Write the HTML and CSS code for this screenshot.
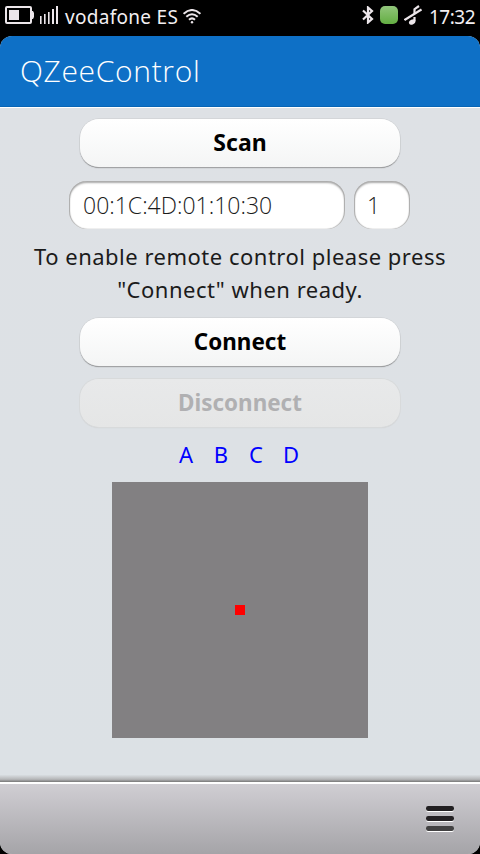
FILE: index.html
```html
<!DOCTYPE html>
<html lang="en">
<head>
<meta charset="utf-8">
<title>QZeeControl</title>
<link rel="stylesheet" href="styles.css">
</head>
<body>
<div class="status">
  <svg class="battery" width="29" height="18" viewBox="0 0 29 18"><rect x="1" y="1" width="25" height="16" rx="1" fill="none" stroke="#ece6ea" stroke-width="2"/><path d="M27 5h1l1 2v4l-1 2h-1z" fill="#ece6ea"/><rect x="4" y="4" width="10" height="10" fill="#ece6ea"/></svg>
  <svg class="signal" width="18" height="18" viewBox="0 0 18 18" fill="#ece6ea"><path d="M0 10h1.6v8H0zM4 8h1.6v10H4zM8 6h1.6v12H8zM12 3h2v15h-2zM16 0h2v18h-2z"/></svg>
  <span class="carrier">vodafone ES</span>
  <svg class="wifi" width="18" height="15" viewBox="0 0 18 15" fill="none" stroke="#ece6ea" stroke-width="2"><path d="M.6 4.8Q9-2.8 17.4 4.8M3.3 7.8Q9 2.6 14.7 7.8M6 10.7Q9 8 12 10.7"/><circle cx="9" cy="13.2" r="1.2" fill="#ece6ea" stroke="none"/></svg>
  <span class="spacer"></span>
  <svg class="bluetooth" width="12" height="18" viewBox="0 0 12 18" fill="none" stroke="#ece6ea" stroke-width="2.2"><path d="M1 4.5l9 8.5-4 3.5v-15L10 5l-9 8.5"/></svg>
  <span class="presence"></span>
  <svg class="silent" width="18" height="20" viewBox="0 0 18 20" fill="none" stroke="#ece6ea"><path d="M.5 15L17.5 4.5" stroke-width="2.2"/><path d="M10.5 9V4.2L15 1M10.5 12v4" stroke-width="2.2"/><ellipse cx="8.2" cy="17" rx="3.4" ry="2.4" transform="rotate(-25 8.2 17)" fill="#ece6ea" stroke="none"/></svg>
  <span class="clock">17:32</span>
</div>
<div class="app">
  <header class="header"><h1 class="title">QZeeControl</h1></header>
  <main class="content">
    <button class="button scan"><span>Scan</span></button>
    <div class="fields">
      <div class="field address"><span>00:1C:4D:01:10:30</span></div>
      <div class="field channel"><span>1</span></div>
    </div>
    <p class="message">To enable remote control please press<br>"Connect" when ready.</p>
    <button class="button connect"><span>Connect</span></button>
    <button class="button disconnect" disabled><span>Disconnect</span></button>
    <nav class="letters"><a>A</a><a>B</a><a>C</a><a>D</a></nav>
    <div class="pad"><span class="dot"></span></div>
  </main>
  <footer class="toolbar">
    <svg width="30" height="28" viewBox="0 0 30 28"><g fill="#fff"><rect x="1" y="2" width="28" height="5" rx="2.5"/><rect x="1" y="12" width="28" height="5" rx="2.5"/><rect x="1" y="22" width="28" height="5" rx="2.5"/></g><rect x="1" y="1" width="28" height="5" rx="2.2" fill="#211f21"/><rect x="1" y="11" width="28" height="5" rx="2.2" fill="#242124"/><rect x="1" y="21" width="28" height="5" rx="2.2" fill="#424142"/></svg>
  </footer>
</div>
</body>
</html>
```
FILE: styles.css
```css
* { box-sizing: border-box; }
body {
  margin: 0;
  width: 480px;
  height: 854px;
  overflow: hidden;
  background: #000;
  font-family: "Noto Sans", "Open Sans", sans-serif;
  color: #1b1b1b;
}
.status {
  height: 36px;
  display: flex;
  align-items: flex-start;
  padding: 6px 4px 0 5px;
  color: #f3eff2;
  font-size: 19px;
  line-height: 22px;
  white-space: nowrap;
}
.signal { margin-left: 6px; }
.carrier { margin-left: 7px; width: 113px; letter-spacing: .3px; }
.wifi { margin: 3px 0 0 5px; }
.spacer { flex: 1; }
.presence {
  width: 18px;
  height: 18px;
  margin: 0 6px;
  border-radius: 5px;
  background: linear-gradient(#91c57b, #63ae42);
}
.silent { margin-top: -1px; }
.clock { width: 47px; margin-left: 7px; letter-spacing: -.5px; }
.app {
  height: 818px;
  display: flex;
  flex-direction: column;
  border-radius: 12px;
  overflow: hidden;
  background: #dee1e5;
}
.header {
  height: 71px;
  padding-left: 20px;
  background: #0e70c6;
  border-bottom: 1px solid #0865b5;
}
.title {
  margin: 0;
  font: 300 30px/70px "Open Sans", "Noto Sans", sans-serif;
  letter-spacing: .65px;
  color: #fff;
  white-space: nowrap;
}
.content {
  height: 675px;
  display: flex;
  flex-direction: column;
  align-items: center;
  padding-top: 12px;
  border-top: 1px solid #fff;
  background: linear-gradient(#dee1e5, #dce1e5 98.9%, #b5b6b8 99.6%, #777 100%);
}
.button {
  width: 320px;
  height: 48px;
  flex: none;
  padding: 0;
  border: 0;
  border-radius: 19px;
  background: linear-gradient(#fff, #f4f5f5);
  box-shadow: 0 0 0 .5px #c9cbcd, 0 1px 1px #707070;
  color: #000;
  font: 700 23px/46px "Noto Sans", sans-serif;
}
.button span { display: block; white-space: nowrap; transform: scaleX(.975); position: relative; top: -1px; }
.scan { margin-top: -1px; }
.button.scan span { transform: none; }
.fields { display: flex; gap: 9px; margin: 14px 0 0 -1px; }
.field {
  height: 48px;
  border-radius: 18px;
  background: #fff;
  box-shadow: inset 0 2px 2px #aaa, inset 1px 0 1px #aaa, inset -1px 0 1px #aaa;
  font: 300 23px/48px "Open Sans", "Noto Sans", sans-serif;
  white-space: nowrap;
}
.address { width: 276px; padding-left: 14px; }
.channel { width: 56px; padding-left: 13px; }
.message {
  margin: 11px 0 12px;
  font-size: 22px;
  letter-spacing: .5px;
  line-height: 33px;
  text-align: center;
  white-space: nowrap;
}
.connect { margin-bottom: 13px; }
.button.disconnect {
  background: linear-gradient(#e8e9ea, #e5e6e6);
  color: #b0b0b2;
  box-shadow: 0 0 0 1px #d8dadb, 0 1px 1px #c4c5c6;
}
.letters {
  display: grid;
  grid-template-columns: repeat(4, 35px);
  height: 33px;
  margin: 11px 0 0 -3px;
  color: #00f;
  font-size: 22px;
  line-height: 33px;
  text-align: center;
}
.pad {
  width: 256px;
  height: 256px;
  margin-top: 11px;
  display: grid;
  place-items: center;
  background: #828082;
}
.dot { width: 10px; height: 10px; background: #f00; }
.toolbar {
  height: 72px;
  display: flex;
  justify-content: flex-end;
  padding: 21px 25px 0 0;
  border-top: 2px solid #fff;
  background: linear-gradient(#d0ced3, #a5a4a8);
}
```
